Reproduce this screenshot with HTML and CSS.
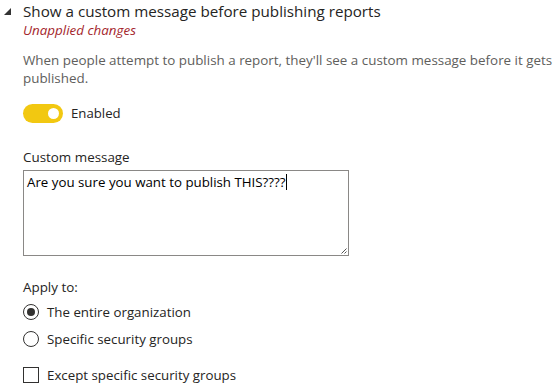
FILE: index.html
```html
<!DOCTYPE html>
<html>
<head>
<meta charset="utf-8">
<link rel="stylesheet" href="styles.css">
</head>
<body>
<div class="setting">
  <div class="header">
    <svg class="caret" width="7" height="7" viewBox="0 0 7 7"><polygon points="7,0 7,7 0,7" fill="#333"/></svg>
    <div class="title">Show a custom message before publishing reports</div>
  </div>
  <div class="body">
    <div class="unapplied">Unapplied changes</div>
    <p class="desc">When people attempt to publish a report, they'll see a custom message before it gets published.</p>
    <div class="toggle-row">
      <span class="toggle"><span class="knob"></span></span>
      <span class="toggle-label">Enabled</span>
    </div>
    <div class="field-label">Custom message</div>
    <div class="textarea"><span class="msg">Are you sure you want to publish THIS????</span><span class="cursor"></span>
      <svg class="grip" width="7" height="7" viewBox="0 0 7 7"><path d="M6.5 1.5 L1.5 6.5 M6.5 4.5 L4.5 6.5" stroke="#555" stroke-width="1" fill="none"/></svg>
    </div>
    <div class="apply-label">Apply to:</div>
    <div class="option"><span class="radio checked"><span class="dot"></span></span><span>The entire organization</span></div>
    <div class="option"><span class="radio"></span><span>Specific security groups</span></div>
    <div class="option check-option"><span class="checkbox"></span><span>Except specific security groups</span></div>
  </div>
</div>
</body>
</html>
```
FILE: styles.css
```css
html, body {
  margin: 0;
  padding: 0;
  background: #fff;
}
body {
  font-family: "Open Sans", "Noto Sans", sans-serif;
  color: #252423;
  width: 560px;
  height: 392px;
  overflow: hidden;
}
.setting {
  padding: 0 0 0 4px;
}
.header {
  display: flex;
  align-items: center;
  gap: 12px;
  height: 22px;
}
.caret {
  flex: none;
  margin-top: 1px;
}
.title {
  font-size: 15.2px;
  color: #252423;
}
.body {
  padding-left: 19px;
}
.unapplied {
  font-size: 13.4px;
  font-style: italic;
  color: #a4262c;
  line-height: 16px;
  margin-top: 0;
}
.desc {
  margin: 13px 0 0;
  font-size: 13.4px;
  line-height: 18px;
  color: #605e5c;
}
.toggle-row {
  display: flex;
  align-items: center;
  gap: 8px;
  margin-top: 16px;
  height: 20px;
}
.toggle {
  display: flex;
  align-items: center;
  justify-content: flex-end;
  width: 40px;
  height: 19px;
  border-radius: 10px;
  background: #f2c811;
  box-sizing: border-box;
  padding-right: 4px;
}
.knob {
  width: 11px;
  height: 11px;
  border-radius: 50%;
  background: #fff;
}
.toggle-label {
  font-size: 13.2px;
  color: #252423;
}
.field-label {
  margin-top: 25px;
  font-size: 13.4px;
  line-height: 18px;
}
.textarea {
  position: relative;
  margin-top: 4px;
  width: 326px;
  height: 86px;
  box-sizing: border-box;
  border: 1px solid #8a8886;
  padding: 2px 3px;
  font-size: 13.3px;
  line-height: 18px;
  color: #000;
}
.cursor {
  display: inline-block;
  width: 1px;
  height: 16px;
  background: #000;
  vertical-align: -3px;
}
.grip {
  position: absolute;
  right: 1px;
  bottom: 1px;
}
.apply-label {
  margin-top: 22px;
  margin-bottom: 2px;
  font-size: 13.4px;
  line-height: 18px;
}
.option {
  display: flex;
  align-items: center;
  gap: 8px;
  font-size: 13.3px;
  height: 27px;
}
.radio {
  width: 16px;
  height: 16px;
  border: 1px solid #323130;
  border-radius: 50%;
  box-sizing: border-box;
  display: flex;
  align-items: center;
  justify-content: center;
}
.dot {
  width: 8px;
  height: 8px;
  border-radius: 50%;
  background: #323130;
}
.check-option {
  margin-top: 9px;
}
.checkbox {
  width: 16px;
  height: 16px;
  border: 1px solid #323130;
  box-sizing: border-box;
}
```
